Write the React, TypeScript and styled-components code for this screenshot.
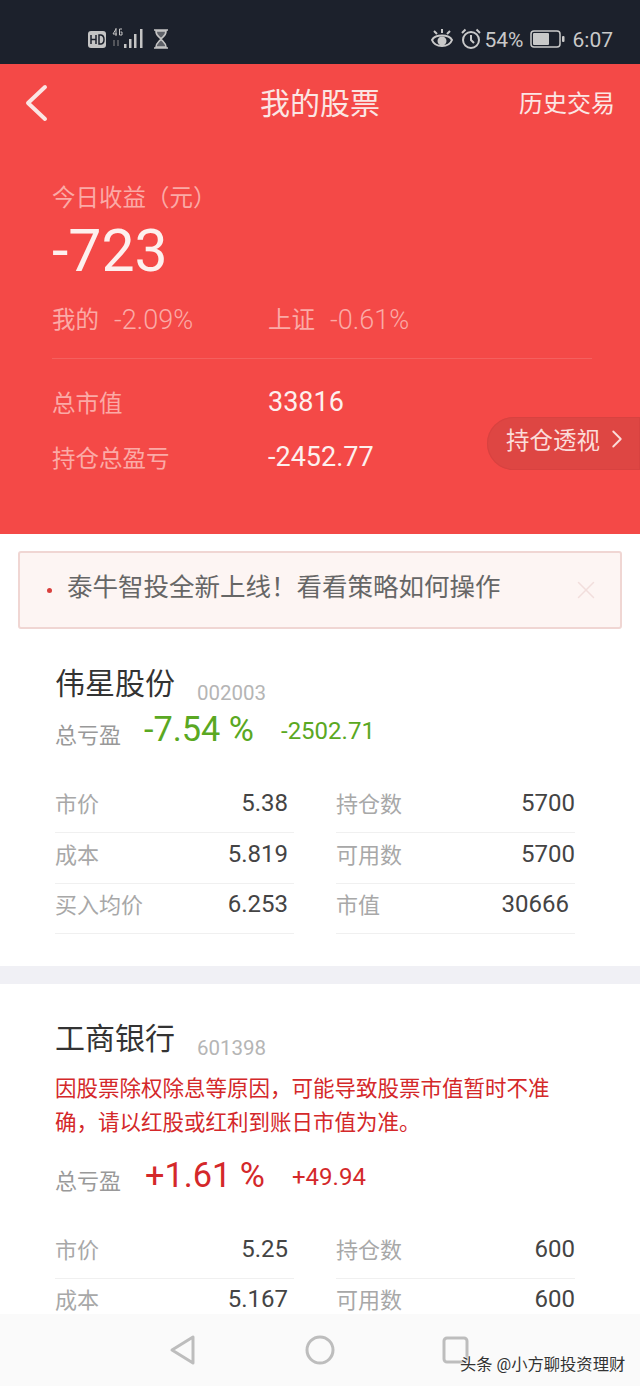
import styled, { createGlobalStyle } from "styled-components";
import { ChevronRight, X } from "lucide-react";

const GlobalStyle = createGlobalStyle`
  html, body {
    margin: 0;
    padding: 0;
    background: #fff;
    font-family: Roboto, "Noto Sans CJK SC", sans-serif;
  }
`;

type Cell = { label: string; value: string; inset?: boolean };
type Stock = {
  name: string;
  code: string;
  pct: string;
  amount: string;
  up?: boolean;
  notice?: string;
  left: Cell[];
  right: Cell[];
};

const stocks: Stock[] = [
  {
    name: "伟星股份",
    code: "002003",
    pct: "-7.54 %",
    amount: "-2502.71",
    left: [
      { label: "市价", value: "5.38" },
      { label: "成本", value: "5.819" },
      { label: "买入均价", value: "6.253" },
    ],
    right: [
      { label: "持仓数", value: "5700" },
      { label: "可用数", value: "5700" },
      { label: "市值", value: "30666", inset: true },
    ],
  },
  {
    name: "工商银行",
    code: "601398",
    pct: "+1.61 %",
    amount: "+49.94",
    up: true,
    notice: "因股票除权除息等原因，可能导致股票市值暂时不准确，请以红股或红利到账日市值为准。",
    left: [
      { label: "市价", value: "5.25" },
      { label: "成本", value: "5.167" },
    ],
    right: [
      { label: "持仓数", value: "600" },
      { label: "可用数", value: "600" },
    ],
  },
];

const StatusIcons = () => (
  <>
    <StatusGroup>
      <svg width="84" height="24" viewBox="0 0 84 24" fill="none">
        <rect x="2" y="4" width="18" height="17" rx="3" fill="#c4c4c4" />
        <path d="M5 8v9M10 8v9M5 12.500h5M13 8v9h2q3-.5 3-4.500t-3-4.500z" stroke="#1c212c" strokeWidth="1.500" />
        <path d="M30 2l-3 5h4M30 1v8" stroke="#c4c4c4" strokeWidth="1" />
        <path d="M36 2h-2.500v6h2.500v-3h-1.500" stroke="#c4c4c4" strokeWidth="1" />
        <path d="M28 13v6M32 13v6" stroke="#8a8a8a" strokeWidth="1" />
        <rect x="38" y="17" width="2.500" height="4" fill="#c4c4c4" />
        <rect x="43" y="12" width="2.500" height="9" fill="#c4c4c4" />
        <rect x="48" y="7" width="2.500" height="14" fill="#c4c4c4" />
        <rect x="54" y="2" width="2.500" height="19" fill="#c4c4c4" />
        <path d="M68 3h14M68 21h14M70 4c0 5 3 5.500 5 8 2-2.500 5-3 5-8zM70 20c0-4 3-5 5-8 2 3 5 4 5 8z" stroke="#c4c4c4" strokeWidth="1.600" fill="#c4c4c4" fillOpacity="0.4" />
      </svg>
    </StatusGroup>
    <StatusGroup>
      <svg width="30" height="24" viewBox="0 0 30 24" fill="none" stroke="#c9c9c9" strokeWidth="2">
        <path d="M1 13c3-6 17-6 20 0-3 8-17 8-20 0z" />
        <circle cx="11" cy="14" r="3.500" fill="#c9c9c9" />
        <path d="M3 4l3 3M11 2v4M19 4l-3 3" />
      </svg>
      <svg width="24" height="24" viewBox="0 0 24 24" fill="none" stroke="#c9c9c9" strokeWidth="2">
        <circle cx="10" cy="13" r="8" />
        <path d="M10 8v5l3 3M1 6l3.500-3.500M19 6l-3.500-3.500" />
      </svg>
      <StatusText>54%</StatusText>
      <svg width="49" height="20" viewBox="0 0 49 20">
        <rect x="7" y="2" width="29" height="16" rx="3" fill="none" stroke="#c9c9c9" strokeWidth="1.500" />
        <rect x="9" y="4" width="16" height="12" rx="1" fill="#c9c9c9" />
        <rect x="38" y="7" width="2.500" height="6" rx="1" fill="#c9c9c9" />
      </svg>
      <StatusText>6:07</StatusText>
    </StatusGroup>
  </>
);

const StockCard = ({ stock }: { stock: Stock }) => (
  <Card>
    <NameRow>
      <StockName>{stock.name}</StockName>
      <StockCode>{stock.code}</StockCode>
    </NameRow>
    {stock.notice && <Notice>{stock.notice}</Notice>}
    <ProfitRow $spaced={!!stock.notice}>
      <ProfitLabel>总亏盈</ProfitLabel>
      <ProfitPct $up={stock.up}>{stock.pct}</ProfitPct>
      <ProfitAmount $up={stock.up}>{stock.amount}</ProfitAmount>
    </ProfitRow>
    <Columns>
      {[stock.left, stock.right].map((column, i) => (
        <div key={i}>
          {column.map((cell) => (
            <Row key={cell.label} $inset={i === 0 || !!cell.inset}>
              <RowLabel>{cell.label}</RowLabel>
              <RowValue>{cell.value}</RowValue>
            </Row>
          ))}
        </div>
      ))}
    </Columns>
  </Card>
);

const App = () => (
  <Screen>
    <GlobalStyle />
    <StatusBar>
      <StatusIcons />
    </StatusBar>
    <Hero>
      <NavBar>
        <BackIcon width="24" height="38" viewBox="0 0 24 38" fill="none" stroke="#fbe6e4" strokeWidth="4" strokeLinecap="round" strokeLinejoin="round">
          <path d="M21 3L4 19l17 16" />
        </BackIcon>
        <Title>我的股票</Title>
        <NavLink>历史交易</NavLink>
      </NavBar>
      <Summary>
        <TodayLabel>今日收益（元）</TodayLabel>
        <TodayValue>-723</TodayValue>
        <CompareRow>
          <CompareItem>
            <span>我的</span>
            <CompareValue>-2.09%</CompareValue>
          </CompareItem>
          <CompareItem>
            <span>上证</span>
            <CompareValue>-0.61%</CompareValue>
          </CompareItem>
        </CompareRow>
        <Divider />
        <TotalRow>
          <TotalLabel>总市值</TotalLabel>
          <TotalValue>33816</TotalValue>
        </TotalRow>
        <TotalRow>
          <TotalLabel>持仓总盈亏</TotalLabel>
          <TotalValue>-2452.77</TotalValue>
        </TotalRow>
      </Summary>
      <HoldingPill>
        持仓透视
        <ChevronRight size={30} strokeWidth={1.5} />
      </HoldingPill>
    </Hero>
    <Banner>
      <BannerDot />
      <BannerText>泰牛智投全新上线！看看策略如何操作</BannerText>
      <X size={30} strokeWidth={1.2} color="#f2dedc" />
    </Banner>
    <StockCard stock={stocks[0]} />
    <Gap />
    <StockCard stock={stocks[1]} />
    <BottomNav>
      <svg width="30" height="32" viewBox="0 0 30 32" fill="none" stroke="#bdbdbd" strokeWidth="3" strokeLinejoin="round">
        <path d="M25 3v26L4 16z" />
      </svg>
      <svg width="30" height="30" viewBox="0 0 30 30" fill="none" stroke="#bdbdbd" strokeWidth="3">
        <circle cx="15" cy="15" r="13" />
      </svg>
      <svg width="27" height="28" viewBox="0 0 27 28" fill="none" stroke="#bdbdbd" strokeWidth="3">
        <rect x="2" y="2" width="23" height="24" rx="3" />
      </svg>
      <Watermark>头条 @小方聊投资理财</Watermark>
    </BottomNav>
  </Screen>
);

export default App;

const Screen = styled.div`
  position: relative;
  width: 640px;
  height: 1386px;
  overflow: hidden;
  background: #fff;
`;

const StatusBar = styled.header`
  height: 64px;
  box-sizing: border-box;
  padding: 27px 27px 0 86px;
  background: #1c212c;
  display: flex;
  justify-content: space-between;
  align-items: flex-start;
`;

const StatusGroup = styled.div`
  display: flex;
  align-items: center;
  height: 24px;
`;

const StatusText = styled.span`
  color: #c9c9c9;
  font-size: 21px;
  line-height: 24px;
  margin-top: 2px;
`;

const Hero = styled.section`
  position: relative;
  height: 470px;
  background: #f44947;
`;

const NavBar = styled.div`
  height: 80px;
  display: flex;
  align-items: center;
  justify-content: space-between;
  padding: 0 25px 0 24px;
  position: relative;
`;

const BackIcon = styled.svg`
  margin-top: -2px;
`;

const Title = styled.div`
  position: absolute;
  left: 0;
  right: 0;
  text-align: center;
  font-size: 30px;
  color: #fbe6e4;
  margin-top: -7px;
  pointer-events: none;
`;

const NavLink = styled.div`
  font-size: 24px;
  color: #fbe6e4;
  margin-top: -5px;
`;

const Summary = styled.div`
  padding: 38px 48px 0 52px;
`;

const TodayLabel = styled.div`
  font-size: 23.5px;
  line-height: 32px;
  color: #fbaaa6;
`;

const TodayValue = styled.div`
  margin-top: 4px;
  font-size: 59px;
  line-height: 66px;
  font-weight: 400;
  color: #fdf0ee;
`;

const CompareRow = styled.div`
  display: grid;
  grid-template-columns: 216px 1fr;
  margin-top: 19px;
`;

const CompareItem = styled.div`
  display: flex;
  align-items: center;
  gap: 15px;
  font-size: 23.5px;
  line-height: 34px;
  color: #fbaaa6;
`;

const CompareValue = styled.span`
  font-size: 27px;
  font-weight: 300;
`;

const Divider = styled.div`
  height: 1px;
  margin: 21px 0 14px;
  background: rgba(255, 255, 255, 0.13);
`;

const TotalRow = styled.div`
  display: grid;
  grid-template-columns: 216px 1fr;
  align-items: center;
  height: 55px;
`;

const TotalLabel = styled.div`
  font-size: 23.5px;
  color: #fbaaa6;
  margin-top: 3px;
`;

const TotalValue = styled.div`
  font-size: 27px;
  color: #fdf0ee;
  margin-top: 3px;
`;

const HoldingPill = styled.div`
  position: absolute;
  top: 353px;
  right: 0;
  width: 153px;
  height: 53px;
  box-sizing: border-box;
  padding: 0 0 9px 19px;
  display: flex;
  align-items: center;
  gap: 2px;
  border-radius: 27px 0 0 27px;
  background: #de4643;
  box-shadow: inset 0 0 0 1px #d84240;
  font-size: 23.5px;
  color: #fbdcd9;
  white-space: nowrap;
`;

const Banner = styled.div`
  margin: 17px 18px 0;
  height: 78px;
  box-sizing: border-box;
  padding: 0 19px 0 27px;
  display: flex;
  align-items: center;
  background: #fdf5f3;
  border: 2px solid #f0d6d3;
  border-radius: 3px;
`;

const BannerDot = styled.span`
  width: 5px;
  height: 5px;
  border-radius: 50%;
  background: #d9403d;
  margin-right: 15px;
  flex: none;
`;

const BannerText = styled.div`
  flex: 1;
  font-size: 25.5px;
  color: #666;
  margin-bottom: 11px;
  white-space: nowrap;
`;

const Card = styled.article`
  padding: 35px 65px 31px 55px;
`;

const NameRow = styled.div`
  display: flex;
  align-items: flex-end;
  gap: 22px;
  height: 40px;
`;

const StockName = styled.div`
  font-size: 30px;
  line-height: 40px;
  color: #333;
`;

const StockCode = styled.div`
  font-size: 20.5px;
  line-height: 28px;
  color: #b5b5b5;
  margin-bottom: -3px;
`;

const Notice = styled.p`
  margin: 13px 8px 0 0;
  font-size: 21.5px;
  line-height: 34px;
  color: #d4282a;
`;

const ProfitRow = styled.div<{ $spaced: boolean }>`
  display: flex;
  align-items: center;
  height: 44px;
  margin-top: ${(p) => (p.$spaced ? "13px" : "3px")};
`;

const ProfitLabel = styled.div`
  font-size: 22px;
  color: #999;
  margin-top: 8px;
`;

const ProfitPct = styled.div<{ $up?: boolean }>`
  margin-left: ${(p) => (p.$up ? "24px" : "23px")};
  font-size: 34.3px;
  color: ${(p) => (p.$up ? "#d4282a" : "#5aa822")};
`;

const ProfitAmount = styled.div<{ $up?: boolean }>`
  margin-left: 27px;
  margin-top: 4px;
  font-size: 24px;
  color: ${(p) => (p.$up ? "#d4282a" : "#5aa822")};
`;

const Columns = styled.div`
  display: grid;
  grid-template-columns: 239px 239px;
  column-gap: 42px;
  margin-top: 32px;
`;

const Row = styled.div<{ $inset: boolean }>`
  height: 38px;
  margin-bottom: 0.5px;
  padding: 0 ${(p) => (p.$inset ? "6px" : "0")} 11px 0;
  border-bottom: 1px solid #f0f0f0;
  display: flex;
  justify-content: space-between;
  align-items: center;
`;

const RowLabel = styled.span`
  font-size: 22px;
  color: #a8a8a8;
`;

const RowValue = styled.span`
  font-size: 24px;
  color: #444;
  margin-top: 2px;
`;

const Gap = styled.div`
  height: 18px;
  background: #f0f0f5;
`;

const BottomNav = styled.nav`
  position: absolute;
  left: 0;
  right: 0;
  bottom: 0;
  height: 72px;
  padding-left: 168px;
  box-sizing: border-box;
  display: flex;
  align-items: center;
  gap: 107px;
  background: #fafafa;
`;

const Watermark = styled.div`
  position: absolute;
  left: 460px;
  top: 37px;
  font-size: 16.3px;
  color: #333;
  white-space: nowrap;
  text-shadow: 0 0 2px #fff, 0 0 2px #fff;
`;
